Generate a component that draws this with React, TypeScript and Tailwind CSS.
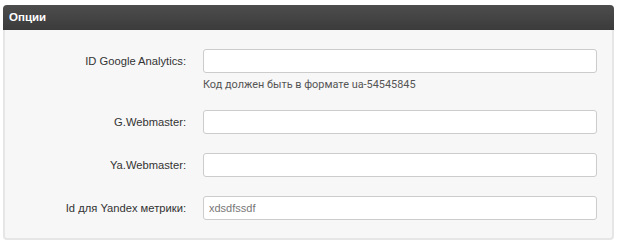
const rows = [
  { label: 'ID Google Analytics:', value: '', hint: 'Код должен быть в формате ua-54545845' },
  { label: 'G.Webmaster:', value: '' },
  { label: 'Ya.Webmaster:', value: '' },
  { label: 'Id для Yandex метрики:', value: 'xdsdfssdf' },
];

export default function App() {
  return (
    <div className="h-[245px] w-[620px] bg-white px-[3px] pt-[5px] font-['Liberation_Sans',Arial,sans-serif]">
      <div className="w-[611px]">
        <div className="flex h-[25px] items-center rounded-t-[4px] bg-gradient-to-b from-[#4d4d4d] to-[#3b3b3b] px-[6px] text-[11.5px] font-bold text-white">
          Опции
        </div>
        <div className="flex flex-col gap-[19px] rounded-b-[4px] border-x-2 border-b-2 border-[#e6e6e6] bg-[#f7f7f7] pb-[18px] pt-[19px]">
          {rows.map((row) => (
            <div key={row.label}>
              <div className="flex items-center">
                <label className="w-[181px] shrink-0 text-right text-[11.2px] text-[#333]">{row.label}</label>
                <input
                  readOnly
                  value={row.value}
                  className="ml-[17px] h-[24px] w-[394px] rounded-[3px] border border-[#cccccc] bg-white px-[5px] text-[11px] text-[#777] outline-none"
                />
              </div>
              {row.hint && (
                <div className="ml-[198px] mt-[5px] h-[13px] font-['Roboto',sans-serif] text-[10.9px] leading-[13px] text-[#555]">
                  {row.hint}
                </div>
              )}
            </div>
          ))}
        </div>
      </div>
    </div>
  );
}
